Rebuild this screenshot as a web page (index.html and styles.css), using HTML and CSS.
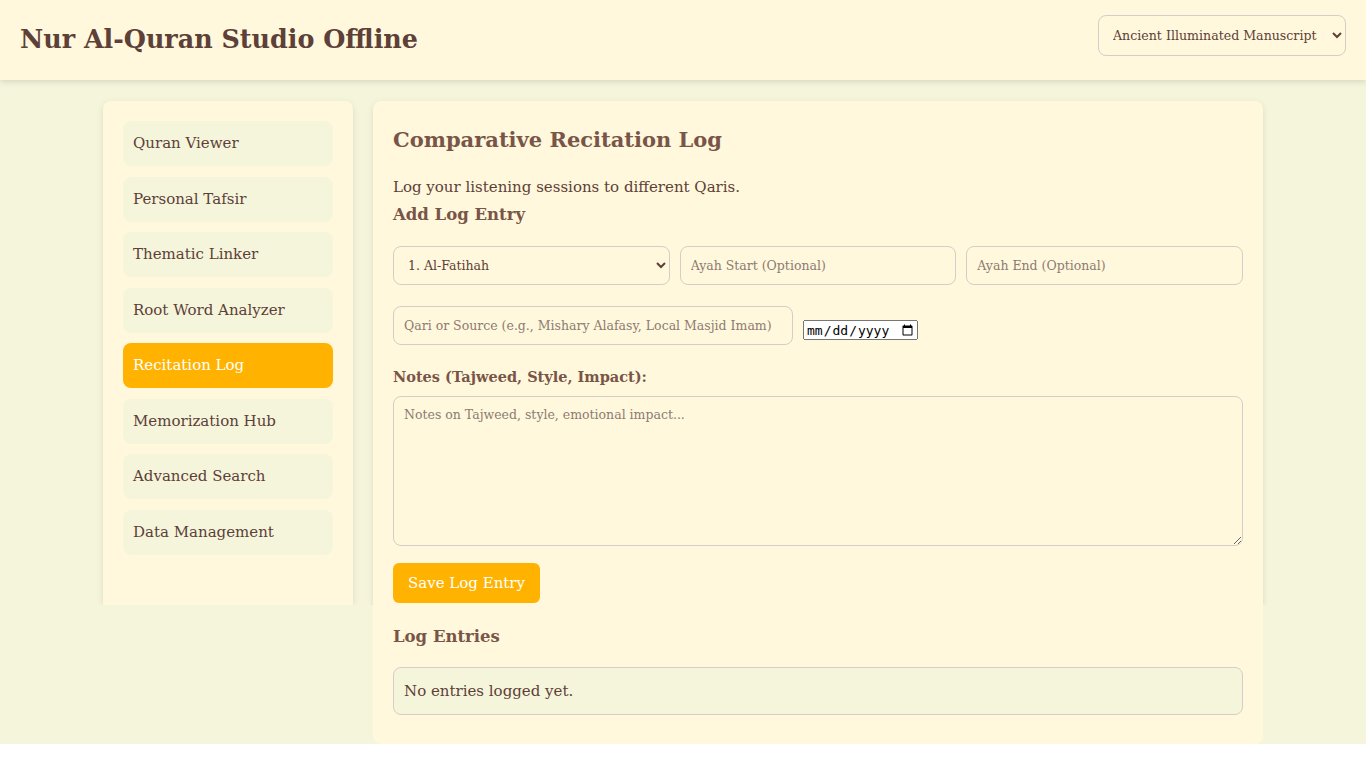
FILE: index.html
```html
<!DOCTYPE html>
<html lang="en">
<head>
<meta charset="utf-8">
<title>Nur Al-Quran Studio Offline</title>
<link rel="stylesheet" href="styles.css">
</head>
<body>
<div class="app">
  <header class="topbar">
    <h1 class="brand">Nur Al-Quran Studio Offline</h1>
    <select class="theme-select">
      <option>Ancient Illuminated Manuscript</option>
    </select>
  </header>
  <div class="layout">
    <aside class="sidebar">
      <nav class="nav">
        <a class="nav-item">Quran Viewer</a>
        <a class="nav-item">Personal Tafsir</a>
        <a class="nav-item">Thematic Linker</a>
        <a class="nav-item">Root Word Analyzer</a>
        <a class="nav-item active">Recitation Log</a>
        <a class="nav-item">Memorization Hub</a>
        <a class="nav-item">Advanced Search</a>
        <a class="nav-item">Data Management</a>
      </nav>
    </aside>
    <main class="main">
      <section class="card">
        <h2 class="title">Comparative Recitation Log</h2>
        <p class="lead">Log your listening sessions to different Qaris.</p>
        <h3 class="subtitle">Add Log Entry</h3>
        <div class="row three">
          <select class="field">
            <option>1. Al-Fatihah</option>
          </select>
          <input class="field" type="text" placeholder="Ayah Start (Optional)">
          <input class="field" type="text" placeholder="Ayah End (Optional)">
        </div>
        <div class="row two">
          <input class="field qari" type="text" placeholder="Qari or Source (e.g., Mishary Alafasy, Local Masjid Imam)">
          <input class="date" type="date">
        </div>
        <label class="label">Notes (Tajweed, Style, Impact):</label>
        <textarea class="notes" placeholder="Notes on Tajweed, style, emotional impact..."></textarea>
        <button class="btn">Save Log Entry</button>
      </section>
      <section class="card-rest">
        <h3 class="subtitle">Log Entries</h3>
        <div class="empty">No entries logged yet.</div>
      </section>
    </main>
  </div>
</div>
</body>
</html>
```
FILE: styles.css
```css
* { box-sizing: border-box; }
html { background: #ffffff; }
body {
  margin: 0;
  font-family: "DejaVu Serif", serif;
  color: #5d4037;
}
.app {
  background: #f5f5dc;
}
.topbar {
  height: 80px;
  background: #fff8dc;
  display: flex;
  align-items: center;
  justify-content: space-between;
  padding: 0 20px;
  box-shadow: 0 2px 6px rgba(0,0,0,0.12);
  position: relative;
  z-index: 1;
}
.brand {
  margin: -2px 0 0;
  font-size: 25.4px;
  font-weight: bold;
  color: #5d4037;
}
.theme-select {
  margin-top: -10px;
  width: 248px;
  height: 41px;
  padding: 0 10px;
  font-family: inherit;
  font-size: 12.6px;
  color: #5d4037;
  background: #fff8dc;
  border: 1px solid #d7ccc8;
  border-radius: 8px;
}
.layout {
  max-width: 1200px;
  margin: 0 auto;
  padding: 21px 20px 0;
  display: grid;
  grid-template-columns: 250px 1fr;
  gap: 20px;
  align-items: start;
}
.sidebar {
  height: 504px;
  background: #fff8dc;
  border-radius: 8px 8px 0 0;
  box-shadow: 0 2px 6px rgba(0,0,0,0.1);
  clip-path: inset(-10px -10px 0 -10px);
  padding: 20px;
}
.nav {
  display: flex;
  flex-direction: column;
  gap: 10.5px;
}
.nav-item {
  display: block;
  height: 45px;
  line-height: 45px;
  padding: 0 10px;
  background: #f5f5dc;
  border-radius: 8px;
  font-size: 15px;
  color: #5d4037;
}
.nav-item.active {
  background: #ffb300;
  color: #ffffff;
}
.main {
  display: flex;
  flex-direction: column;
}
.card {
  height: 504px;
  background: #fff8dc;
  border-radius: 8px 8px 0 0;
  box-shadow: 0 2px 6px rgba(0,0,0,0.1);
  clip-path: inset(-10px -10px 0 -10px);
  padding: 20px 20px 0;
}
.card-rest {
  background: #fff8dc;
  border-radius: 0 0 8px 8px;
  padding: 20px 20px 29px;
}
.title {
  margin: 0;
  height: 38px;
  line-height: 38px;
  font-size: 21px;
  font-weight: bold;
  color: #795548;
}
.lead {
  margin: 18px 0 0;
  font-size: 15px;
  line-height: 20px;
}
.subtitle {
  margin: 6px 0 0;
  font-size: 16.5px;
  line-height: 24px;
  font-weight: bold;
  color: #795548;
}
.card-rest .subtitle { margin: 0; }
.row {
  display: flex;
  gap: 10px;
  align-items: center;
}
.row.three { margin-top: 19px; }
.row.three .field { flex: 1; }
.row.two { margin-top: 21px; }
.field {
  height: 39px;
  padding: 0 10px;
  font-family: inherit;
  font-size: 12.5px;
  color: #5d4037;
  background: #fff8dc;
  border: 1px solid #d7ccc8;
  border-radius: 8px;
}
.field::placeholder { color: #8d7b72; }
.qari { width: 400px; flex: none; }
.date {
  width: 115px;
  height: 20px;
  font-size: 13px;
  margin-top: 9px;
}
.label {
  display: block;
  margin-top: 22px;
  font-size: 14.5px;
  line-height: 20px;
  font-weight: bold;
  color: #795548;
}
.notes {
  display: block;
  width: 100%;
  height: 150px;
  margin-top: 9px;
  padding: 10px;
  font-family: inherit;
  font-size: 12.5px;
  color: #5d4037;
  background: #fff8dc;
  border: 1px solid #d7ccc8;
  border-radius: 8px;
  resize: vertical;
}
.notes::placeholder { color: #8d7b72; }
.btn {
  display: block;
  margin-top: 17px;
  height: 40px;
  padding: 0 15px;
  font-family: inherit;
  font-size: 15px;
  color: #ffffff;
  background: #ffb300;
  border: none;
  border-radius: 6px;
}
.empty {
  margin-top: 18px;
  height: 48px;
  line-height: 46px;
  padding: 0 10px;
  background: #f5f5dc;
  border: 1px solid #d7ccc8;
  border-radius: 8px;
  font-size: 15px;
}
```
